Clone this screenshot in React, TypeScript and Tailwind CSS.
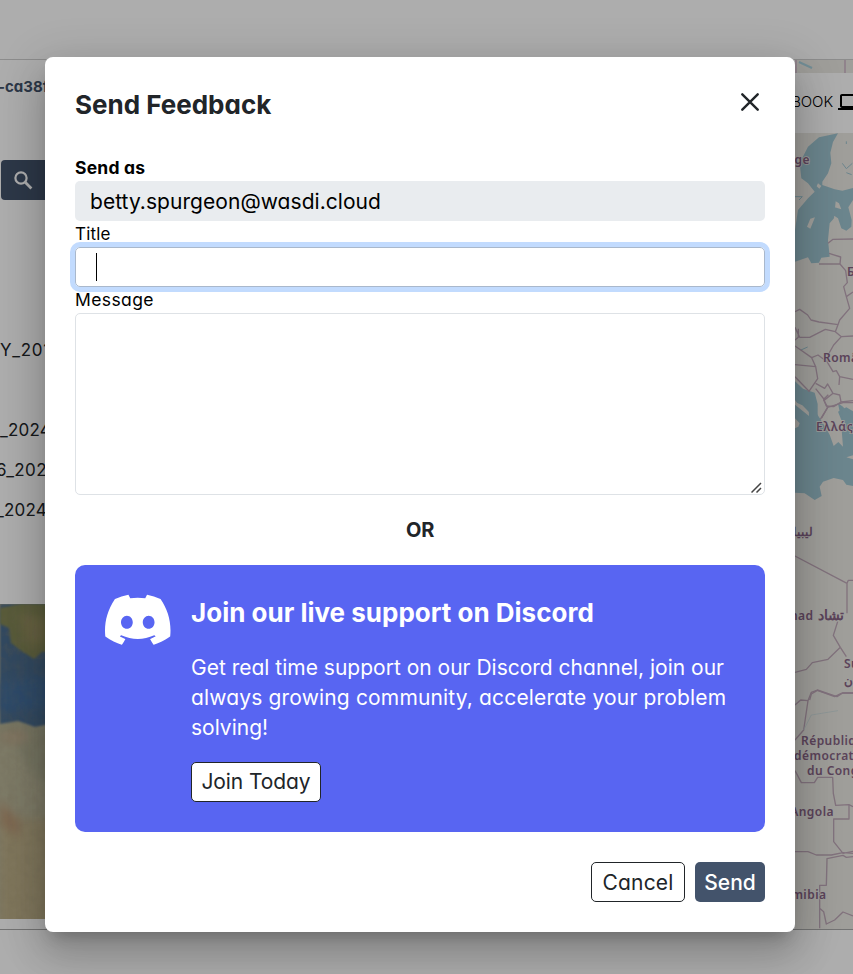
import React from "react";
import { SiDiscord } from "react-icons/si";
import { MdLaptop } from "react-icons/md";

function Coast() {
  return (
    <svg className="block h-full w-full" viewBox="795 60 58 869" preserveAspectRatio="none">
      <rect x="795" y="60" width="58" height="869" fill="#ebe9e3" />
      <path d="M799 62l13 6" stroke="#aad3df" strokeWidth="2" fill="none" />
      <path d="M796 60v13M845 60v13" stroke="#d2bdcb" strokeWidth="1.8" fill="none" />
      <g transform="translate(783 120) scale(.33333)" strokeLinejoin="round">
        <path fill="#9ec4d0" d="M108 52L165 40L150 66L142 98L145 130L135 160L118 185L118 195L155 208L178 212L210 204V240L196 262L206 300L205 320L190 332L175 325L165 295L150 285L155 262L175 268L168 250L158 244L153 295L140 310L135 360L140 410L115 413L108 428L85 430L75 412L36 425V330L45 270L75 235L95 215L75 190L55 175L50 130L75 80Z" />
        <path fill="#9ec4d0" d="M36 784L60 806L95 818L104 852L104 900H80L36 840ZM165 875L190 862L210 874V900H175Z" />
        <path fill="#ebe9e3" d="M72 320L82 296L96 292L82 326ZM105 190l10 8-6 8-8-7zM36 846l22 10 22 22 4 22H36z" />
        <path stroke="#9ec4d0" strokeWidth="3" fill="none" d="M36 230H58L48 240M54 690l20-9M178 130l12 16 18-16M190 64v8M190 158l16 6" />
        <path fill="none" stroke="#bfa8b8" strokeWidth="4" d="M135 370L150 358L210 357M138 400L173 411L171 432H108M171 432L188 452L193 488L182 500L190 530L210 516M190 530L200 565L170 600L165 614L108 606L84 600L74 585L50 568L36 575M165 614L157 635L127 628L80 652L50 652L36 622M46 626V652L36 660M157 635L175 650L210 648M175 650L152 675L135 705L132 725L105 705L86 713L36 678M86 713L98 740L36 734M98 740L104 776L78 814L36 770M98 790L125 805L134 792L150 820L125 840L98 806M132 725L150 755L160 752L170 770L210 778M170 770L168 795M150 820L170 825L174 846L152 860L130 858L122 838L136 824M174 846L210 842M134 862L112 898" />
      </g>
      <g transform="translate(783 400) scale(.33333)" strokeLinejoin="round">
        <path fill="#9ec4d0" d="M36 55L50 70L46 80L36 85V278L65 280L95 300L116 288L110 260L120 245L152 234L180 240L190 254L210 258V178L190 172L210 166V56L180 20L165 10L172 46L186 70L176 90L180 140L166 126L152 138L140 104L120 70L102 42L98 0H76L78 48L36 14Z" />
        <path fill="none" stroke="#bfa8b8" strokeWidth="4" d="M122 0L134 22L180 8H210M134 22L116 54M36 468L192 550V640M192 550L196 541H210M164 665L151 706L172 742L190 770M172 742L135 778L88 788L70 808L36 817M80 900L85 882L103 871L155 890L175 880H210" />
      </g>
      <g transform="translate(783 680) scale(.33333)" strokeLinejoin="round">
        <path fill="none" stroke="#bfa8b8" strokeWidth="4" d="M36 75L53 60L75 62L85 37L103 30L162 50L180 38H210M75 62L62 150L36 180M36 272L55 308L94 308L104 292H149L151 340L158 376L198 374V417H152V485L180 520L210 514M198 374L210 380M36 515H75L100 525L145 525L180 518L210 520M210 530L190 532L180 526L132 536L130 616H110V745M110 685L122 695L130 732L155 720L180 696L210 708" />
        <path fill="none" stroke="#c5d9dc" strokeWidth="2" d="M62 150L85 105L165 92" />
      </g>
      <g className="font-['Noto_Sans',sans-serif] font-semibold" fill="#866385" stroke="#ebe9e3" strokeWidth="1.5" paintOrder="stroke" fontSize="12">
        <g letterSpacing=".45">
          <text x="810" y="164" textAnchor="end">Norge</text>
          <text x="847" y="276">Беларусь</text>
          <text x="823" y="362">România</text>
          <text x="816" y="431" letterSpacing=".8">Ελλάς</text>
          <text x="813.5" y="620" textAnchor="end">Tchad</text>
          <text x="844" y="668">Sudan</text>
          <text x="801" y="745">République</text>
          <text x="794" y="760">démocratique</text>
          <text x="807" y="775">du Congo</text>
          <text x="834" y="816" textAnchor="end">Angola</text>
          <text x="826.5" y="899" textAnchor="end">Namibia</text>
        </g>
        <text x="813" y="536" textAnchor="start" direction="rtl">ليبيا</text>
        <text x="844" y="620" textAnchor="start" direction="rtl" fontSize="13.5">تشاد</text>
        <text x="844" y="685">ن</text>
      </g>
    </svg>
  );
}

function Satellite() {
  return (
    <svg className="block h-[315px] w-full" viewBox="0 0 75 315" preserveAspectRatio="none">
      <defs>
        <filter id="soft" x="-20%" y="-20%" width="140%" height="140%"><feGaussianBlur stdDeviation="4" /></filter>
        <filter id="edge" x="-20%" y="-20%" width="140%" height="140%"><feGaussianBlur stdDeviation=".8" /></filter>
        <filter id="terrain" x="0" y="0" width="100%" height="100%">
          <feTurbulence type="fractalNoise" baseFrequency=".12" numOctaves="4" seed="4" />
          <feColorMatrix values="0 0 0 0 .3  0 0 0 0 .25  0 0 0 0 .15  1.3 0 0 0 -.45" />
        </filter>
      </defs>
      <rect width="75" height="315" fill="#b9b598" />
      <rect y="215" width="75" height="120" fill="#bfae83" opacity=".7" filter="url(#soft)" />
      <path d="M0 118L20 119L45 124L75 122V190L38 175L15 140L0 138Z" fill="#acab8f" filter="url(#soft)" />
      <path d="M0 128L20 124L32 134L16 142L0 138Z" fill="#beae91" filter="url(#soft)" />
      <path d="M0 196L20 218L18 234L0 220Z" fill="#b99a78" filter="url(#soft)" />
      <path d="M0 0H75V115L35 123L18 117L0 120Z" fill="#4c6c8e" filter="url(#edge)" />
      <path d="M0 78L75 68V102L0 108Z" fill="#446e9c" filter="url(#soft)" />
      <path d="M0 4L20 0H75V46L42 48L34 55L20 46L11 39L9 24L0 20Z" fill="#838756" filter="url(#edge)" />
      <path d="M18 8L45 14V38L28 42Z" fill="#979060" filter="url(#soft)" />
      <rect width="75" height="315" filter="url(#terrain)" opacity=".2" />
      <rect width="75" height="55" filter="url(#terrain)" opacity=".2" />
    </svg>
  );
}

function Workspace() {
  return (
    <div className="flex h-full flex-col bg-white">
      <div className="h-[60px] shrink-0 border-b border-[#cfcfcf]" />
      <div className="flex h-[870px] shrink-0 justify-between border-b border-[#aaa]">
        <aside className="flex w-[75px] flex-col overflow-hidden whitespace-nowrap text-[#212529]">
          <div className="-ml-0.5 mt-[15px] h-6 text-[15px] leading-6 font-bold text-[#43536b]">-ca38f</div>
          <div className="mt-[61px] ml-px flex h-10 w-[60px] items-center rounded bg-[#43536b] pl-[13px] text-white">
            <svg className="size-[19px]" viewBox="0 0 19 19" fill="none" stroke="currentColor"><circle cx="7" cy="7" r="5.6" strokeWidth="2.2" /><path d="M11.2 11.2L17.4 17.4" strokeWidth="2.8" /></svg>
          </div>
          <div className="mt-[138px] h-6 text-[17px] leading-6 tracking-[.7px]">Y_2017</div>
          <div className="mt-14 h-6 text-[17px] leading-6 tracking-[.2px]">_2024</div>
          <div className="-ml-1 mt-4 h-6 text-[17px] leading-6 tracking-[.4px]">6_2024</div>
          <div className="-ml-1 mt-4 h-6 text-[17px] leading-6 tracking-[.2px]">_2024</div>
          <div className="mt-[82px]"><Satellite /></div>
        </aside>
        <section className="grid w-[58px] overflow-hidden">
          <div className="col-start-1 row-start-1 h-[869px]"><Coast /></div>
          <div className="z-10 col-start-1 row-start-1 mt-[13px] flex h-[60px] w-[58px] items-center justify-end bg-white pb-[2px] text-black">
            <span className="mr-[5px] text-[15px] font-light tracking-[-.1px]">BOOK</span>
            <MdLaptop size={24} className="-mr-[9px] shrink-0" />
          </div>
        </section>
      </div>
    </div>
  );
}

const inputBase = "block w-full rounded-[5px] border px-[14px] text-black outline-none";

function FeedbackDialog() {
  return (
    <div className="flex h-[875px] w-[750px] flex-col rounded-lg bg-white px-[30px] text-[#212529] shadow-[0_11px_15px_-7px_rgba(0,0,0,.2),0_24px_38px_3px_rgba(0,0,0,.14),0_9px_46px_8px_rgba(0,0,0,.12)]">
      <header className="mt-[30px] flex h-9 items-center justify-between">
        <h1 className="text-[26px] leading-9 font-bold">Send Feedback</h1>
        <svg className="mr-[6px] mb-[6px] size-[18px]" viewBox="0 0 18 18" fill="none" stroke="currentColor" strokeWidth="2.4" strokeLinecap="round"><path d="M1.3 1.3L16.7 16.7M16.7 1.3L1.3 16.7" /></svg>
      </header>
      <label className="mt-8 h-[26px] text-[17.5px] leading-[26px] font-bold tracking-[.2px] text-black">Send as</label>
      <div className="h-10 rounded-[5px] bg-[#e9ecef] px-[15px] text-[21px] leading-[41px] tracking-[.05px] text-black">betty.spurgeon@wasdi.cloud</div>
      <label className="h-[26px] text-[17px] leading-[26px] tracking-[.2px] text-black">Title</label>
      <div className={`${inputBase} flex h-10 items-center border-[#a9b8cc] shadow-[0_0_0_5px_#c2dbfe]`}>
        <span className="ml-[6px] h-7 w-px bg-black" />
      </div>
      <label className="h-[26px] text-[17.5px] leading-[26px] tracking-[.4px] text-black">Message</label>
      <div className={`${inputBase} flex h-[182px] items-end justify-end border-[#dee2e6]`}>
        <svg className="-mr-[12px] mb-[1px] size-[11px]" viewBox="0 0 11 11" stroke="#444" strokeWidth="1.5"><path d="M.5 10.5L10 1M5.5 10.5L10 6" /></svg>
      </div>
      <div className="mt-5 h-[30px] text-center text-[20px] leading-[30px] font-bold tracking-[-.2px]">OR</div>
      <section className="mt-5 flex h-[267px] rounded-[10px] bg-[#5865f2] pt-[30px] pl-[30px] text-white">
        <SiDiscord className="-mt-[8px] h-[65.5px] w-[65.5px] shrink-0" />
        <div className="ml-[20.5px]">
          <h2 className="h-9 text-[26px] leading-9 font-bold whitespace-nowrap">Join our live support on Discord</h2>
          <p className="mt-[22px] text-[21px] leading-[30px] whitespace-nowrap">
            <span className="tracking-[0px]">Get real time support on our Discord channel, join our</span><br />
            <span className="tracking-[.16px]">always growing community, accelerate your problem</span><br />
            <span className="tracking-[0px]">solving!</span>
          </p>
          <button className="mt-[19px] h-10 w-[130px] rounded-[5px] border border-[#212529] bg-white text-[21px] tracking-[-.1px] whitespace-nowrap text-[#212529]">Join Today</button>
        </div>
      </section>
      <footer className="mt-[30px] flex h-10 justify-end gap-[10px] text-[21px]">
        <button className="w-[94px] rounded-[5px] border border-[#212529] pt-px tracking-[.2px]">Cancel</button>
        <button className="w-[70px] rounded-[5px] bg-[#43536b] pt-px font-medium text-white">Send</button>
      </footer>
    </div>
  );
}

export default function App() {
  return (
    <main className="relative h-[974px] w-[853px] overflow-hidden font-['Inter',sans-serif] [font-feature-settings:'cv11']">
      <Workspace />
      <div className="absolute inset-0 z-20 flex items-start justify-center bg-black/32 pt-[57px] pr-[13px]">
        <FeedbackDialog />
      </div>
    </main>
  );
}
